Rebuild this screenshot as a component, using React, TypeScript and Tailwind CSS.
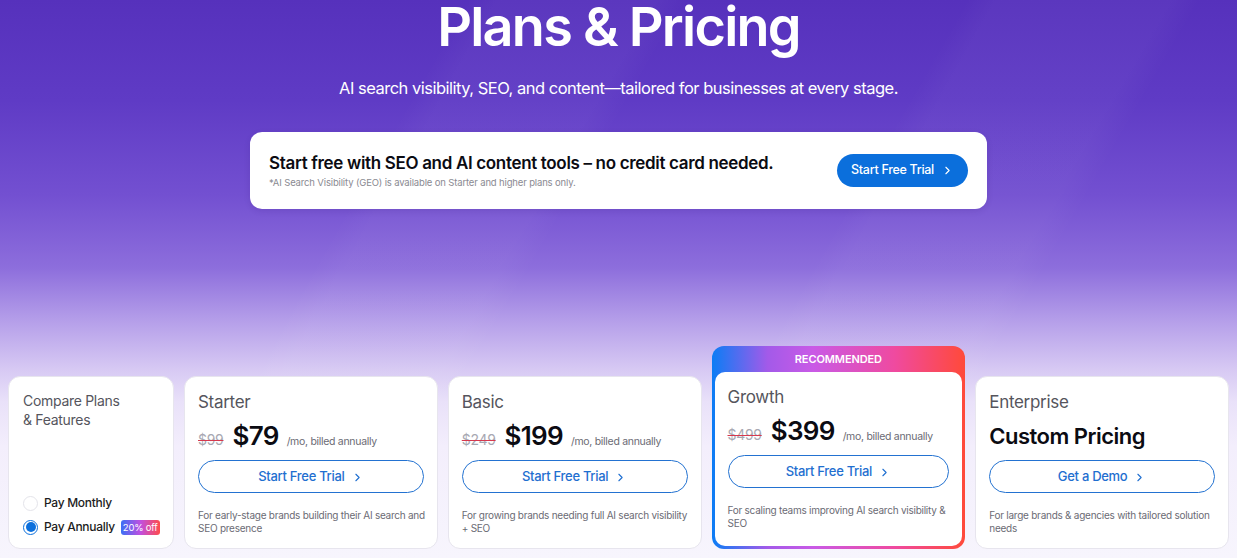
import React from "react";
import { ChevronRight } from "lucide-react";

const font = { fontFamily: "Inter, 'Noto Sans', sans-serif" };

function OutlineButton({ label }: { label: string }) {
  return (
    <button className="flex h-[33px] w-full items-center justify-center gap-[6px] rounded-full border-[1.5px] border-[#2372d1] bg-white text-[13px] font-medium tracking-[-0.3px] text-[#1f6fd0]">
      <span>{label}</span>
      <ChevronRight size={13} strokeWidth={2} className="mt-[1px]" />
    </button>
  );
}

function Price({ old, now }: { old: string; now: string }) {
  return (
    <div className="mt-[8px] flex items-baseline">
      <span className="text-[14px] tracking-[-0.3px] text-[#a8a8b2] line-through decoration-[#d6394f] decoration-[1.2px]">
        {old}
      </span>
      <span className="ml-[9px] text-[26px] font-semibold leading-[30px] tracking-[-0.7px] text-[#0b0b12]">
        {now}
      </span>
      <span className="ml-[8px] text-[10.5px] tracking-[-0.3px] text-[#6b6b74]">
        /mo, billed annually
      </span>
    </div>
  );
}

function PlanBody({
  name,
  old,
  now,
  desc,
  button,
  custom,
}: {
  name: string;
  old?: string;
  now?: string;
  desc: string;
  button: string;
  custom?: boolean;
}) {
  return (
    <div className="flex flex-col px-[13px] pt-[14px]">
      <div className="text-[17px] leading-[22px] tracking-[-0.3px] text-[#55555d]">{name}</div>
      {custom ? (
        <div className="mt-[8px] text-[22px] font-semibold leading-[30px] tracking-[-0.5px] text-[#0b0b12]">
          Custom Pricing
        </div>
      ) : (
        <Price old={old!} now={now!} />
      )}
      <div className="mt-[9px]">
        <OutlineButton label={button} />
      </div>
      <p className="mr-[-4px] mt-[16px] text-[10px] leading-[13px] tracking-[-0.25px] text-[#6b6b74]">{desc}</p>
    </div>
  );
}

function Card({ children }: { children: React.ReactNode }) {
  return (
    <div className="h-[173px] rounded-[12px] border border-[#e7e5ee] bg-white">{children}</div>
  );
}

export default function App() {
  return (
    <div
      style={font}
      className="flex h-[558px] w-full flex-col items-center overflow-hidden bg-[linear-gradient(120deg,transparent_0%,transparent_30%,rgba(255,255,255,0.03)_32%,rgba(255,255,255,0.03)_42%,transparent_44%,transparent_62%,rgba(255,255,255,0.03)_64%,rgba(255,255,255,0.03)_75%,transparent_77%),linear-gradient(180deg,#5631bc_0%,#5f3bc5_18%,#7350d1_35%,#8d6edc_48%,#b7a1ea_58%,#d6c8f3_66%,#e9e1f9_72%,#f3eefc_80%,#f7f5fd_100%)]"
    >
      <h1 className="mt-[0px] text-[54px] font-semibold leading-[54px] tracking-[-1.75px] text-white">
        Plans &amp; Pricing
      </h1>
      <p className="mt-[23px] text-[16.5px] leading-[22px] tracking-[-0.5px] text-white">
        AI search visibility, SEO, and content—tailored for businesses at every stage.
      </p>

      <div className="mt-[33px] flex h-[77px] w-[737px] items-center justify-between rounded-[12px] bg-white pl-[19px] pr-[19px] shadow-[0_2px_6px_rgba(40,10,100,0.12)]">
        <div className="flex flex-col">
          <div className="text-[17px] font-semibold leading-[22px] tracking-[-0.33px] text-[#0b0b12]">
            Start free with SEO and AI content tools – no credit card needed.
          </div>
          <div className="mt-[3px] text-[9.5px] leading-[12px] tracking-[-0.15px] text-[#8a8a92]">
            *AI Search Visibility (GEO) is available on Starter and higher plans only.
          </div>
        </div>
        <button className="flex h-[33px] w-[131px] items-center justify-center gap-[7px] rounded-full bg-[#0b6fdc] text-[12.5px] font-medium tracking-[-0.3px] text-white">
          <span>Start Free Trial</span>
          <ChevronRight size={13} strokeWidth={2} />
        </button>
      </div>

      <div className="mt-[137px] grid w-full grid-cols-[166px_1fr_1fr_1fr_1fr] items-end gap-[10px] px-[8px]">
        <Card>
          <div className="flex h-full flex-col justify-between px-[14px] pb-[13px] pt-[14px]">
            <div className="text-[14px] leading-[19px] tracking-[-0.3px] text-[#55555d]">
              Compare Plans
              <br />&amp; Features
            </div>
            <div className="flex flex-col gap-[8px] whitespace-nowrap">
              <div className="flex h-[16px] items-center gap-[6px]">
                <span className="h-[15px] w-[15px] shrink-0 rounded-full border border-[#e4e4ea] bg-white" />
                <span className="text-[12px] font-medium leading-[16px] tracking-[-0.3px] text-[#1c1c22]">Pay Monthly</span>
              </div>
              <div className="flex h-[16px] items-center gap-[6px]">
                <span className="flex h-[15px] w-[15px] shrink-0 items-center justify-center rounded-full border-[1.5px] border-[#0b6fdc] bg-white">
                  <span className="h-[10px] w-[10px] rounded-full bg-[#0b6fdc]" />
                </span>
                <span className="text-[12px] font-medium leading-[16px] tracking-[-0.3px] text-[#1c1c22]">Pay Annually</span>
                <span className="rounded-[3px] bg-[linear-gradient(90deg,#3b6ff5,#c04fe0_50%,#ff4b4b)] px-[2px] text-[9.5px] leading-[15px] tracking-[-0.2px] text-white">
                  20% off
                </span>
              </div>
            </div>
          </div>
        </Card>
        <Card>
          <PlanBody
            name="Starter"
            old="$99"
            now="$79"
            button="Start Free Trial"
            desc="For early-stage brands building their AI search and SEO presence"
          />
        </Card>
        <Card>
          <PlanBody
            name="Basic"
            old="$249"
            now="$199"
            button="Start Free Trial"
            desc="For growing brands needing full AI search visibility + SEO"
          />
        </Card>
        <div className="flex h-[203px] flex-col rounded-[12px] bg-[linear-gradient(90deg,#0b7df5_0%,#a35ae9_22%,#c95ae6_40%,#ef4aa0_72%,#ff4a3a_100%)] px-[3px] pb-[3px]">
          <div className="flex h-[26px] items-center justify-center text-[11px] font-semibold tracking-[-0.1px] text-white">
            RECOMMENDED
          </div>
          <div className="flex-1 rounded-[10px] bg-white">
            <PlanBody
              name="Growth"
              old="$499"
              now="$399"
              button="Start Free Trial"
              desc="For scaling teams improving AI search visibility & SEO"
            />
          </div>
        </div>
        <Card>
          <PlanBody
            name="Enterprise"
            custom
            button="Get a Demo"
            desc="For large brands & agencies with tailored solution needs"
          />
        </Card>
      </div>
    </div>
  );
}
